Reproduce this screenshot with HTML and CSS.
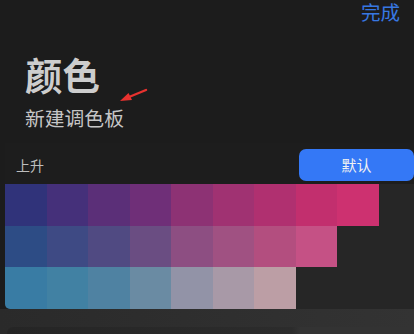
FILE: index.html
```html
<!DOCTYPE html>
<html lang="zh">
<head>
<meta charset="utf-8">
<link rel="stylesheet" href="styles.css">
</head>
<body>
<div class="page">
  <header class="top"><span class="done">完成</span></header>
  <section class="heading">
    <h1 class="title">颜色</h1>
    <p class="subtitle">新建调色板</p>
    <svg class="arrow" width="40" height="24" viewBox="0 0 40 24">
      <path d="M28 4 L11 11" stroke="#e8322f" stroke-width="2.4" stroke-linecap="round" fill="none"/>
      <path d="M2 15 L10.5 7 L14 14 Z" fill="#e8322f"/>
    </svg>
  </section>
  <div class="toolbar">
    <span class="sort">上升</span>
    <button class="default-btn">默认</button>
  </div>
  <div class="palette">
    <div class="row">
      <i style="background:#30337a"></i><i style="background:#45307a"></i><i style="background:#5b2f78"></i><i style="background:#6f2f78"></i><i style="background:#8d3274"></i><i style="background:#a03272"></i><i style="background:#b03070"></i><i style="background:#c22f6e"></i><i style="background:#cd3170"></i>
    </div>
    <div class="row">
      <i style="background:#2d4c85"></i><i style="background:#3e4a84"></i><i style="background:#504a82"></i><i style="background:#6a4d82"></i><i style="background:#8d4e82"></i><i style="background:#a05182"></i><i style="background:#b34e7f"></i><i style="background:#c55185"></i>
    </div>
    <div class="row">
      <i style="background:#397ca4"></i><i style="background:#4181a3"></i><i style="background:#4f82a2"></i><i style="background:#6a8ba3"></i><i style="background:#9293a7"></i><i style="background:#a899a7"></i><i style="background:#bc9ea5"></i>
    </div>
  </div>
  <div class="footer">
    <div class="footer-panel"></div>
  </div>
</div>
</body>
</html>
```
FILE: styles.css
```css
* { box-sizing: border-box; }
html, body { margin: 0; padding: 0; }
body {
  background: #1c1c1c;
  font-family: "Noto Sans CJK SC", "Noto Sans", sans-serif;
  width: 414px;
  height: 334px;
  overflow: hidden;
}
.page { display: flex; flex-direction: column; height: 334px; }
.top {
  display: flex;
  justify-content: flex-end;
  padding-right: 14px;
  height: 22px;
}
.done {
  color: #3777e2;
  font-size: 19.5px;
  line-height: 24px;
}
.heading {
  position: relative;
  padding: 30px 0 0 25px;
  height: 121px;
}
.title {
  margin: 0;
  font-size: 37.5px;
  line-height: 44px;
  font-weight: 700;
  color: #cdcdcd;
}
.subtitle {
  margin: 10px 0 0;
  font-size: 19.8px;
  line-height: 24px;
  color: #c6c6c6;
}
.arrow {
  position: absolute;
  left: 118px;
  top: 64px;
}
.toolbar {
  margin-left: 5px;
  height: 41px;
  background: #1d1d1d;
  display: flex;
  align-items: center;
  justify-content: space-between;
  padding-left: 11px;
}
.sort {
  color: #bdbdbd;
  font-size: 14px;
  line-height: 20px;
  margin-top: 2px;
}
.default-btn {
  width: 115px;
  height: 32px;
  margin-top: 2px;
  border: none;
  border-radius: 7px;
  background: #3478f6;
  color: #f2f2f2;
  font-family: inherit;
  font-size: 15px;
  padding: 0;
}
.palette {
  margin-left: 5px;
  height: 125px;
  background: #262626;
  border-bottom-left-radius: 5px;
  overflow: hidden;
  display: flex;
  flex-direction: column;
}
.row { display: flex; height: 41.7px; }
.row i { display: block; width: 41.55px; height: 100%; }
.footer {
  flex: 1;
  background: linear-gradient(to right, #2a2a2a, #333333);
  padding: 18px 0 0 7px;
}
.footer-panel {
  height: 100%;
  background: linear-gradient(to right, #252525, #2c2c2c 70%, #333 72%, #333);
  border-top-left-radius: 6px;
}
```
